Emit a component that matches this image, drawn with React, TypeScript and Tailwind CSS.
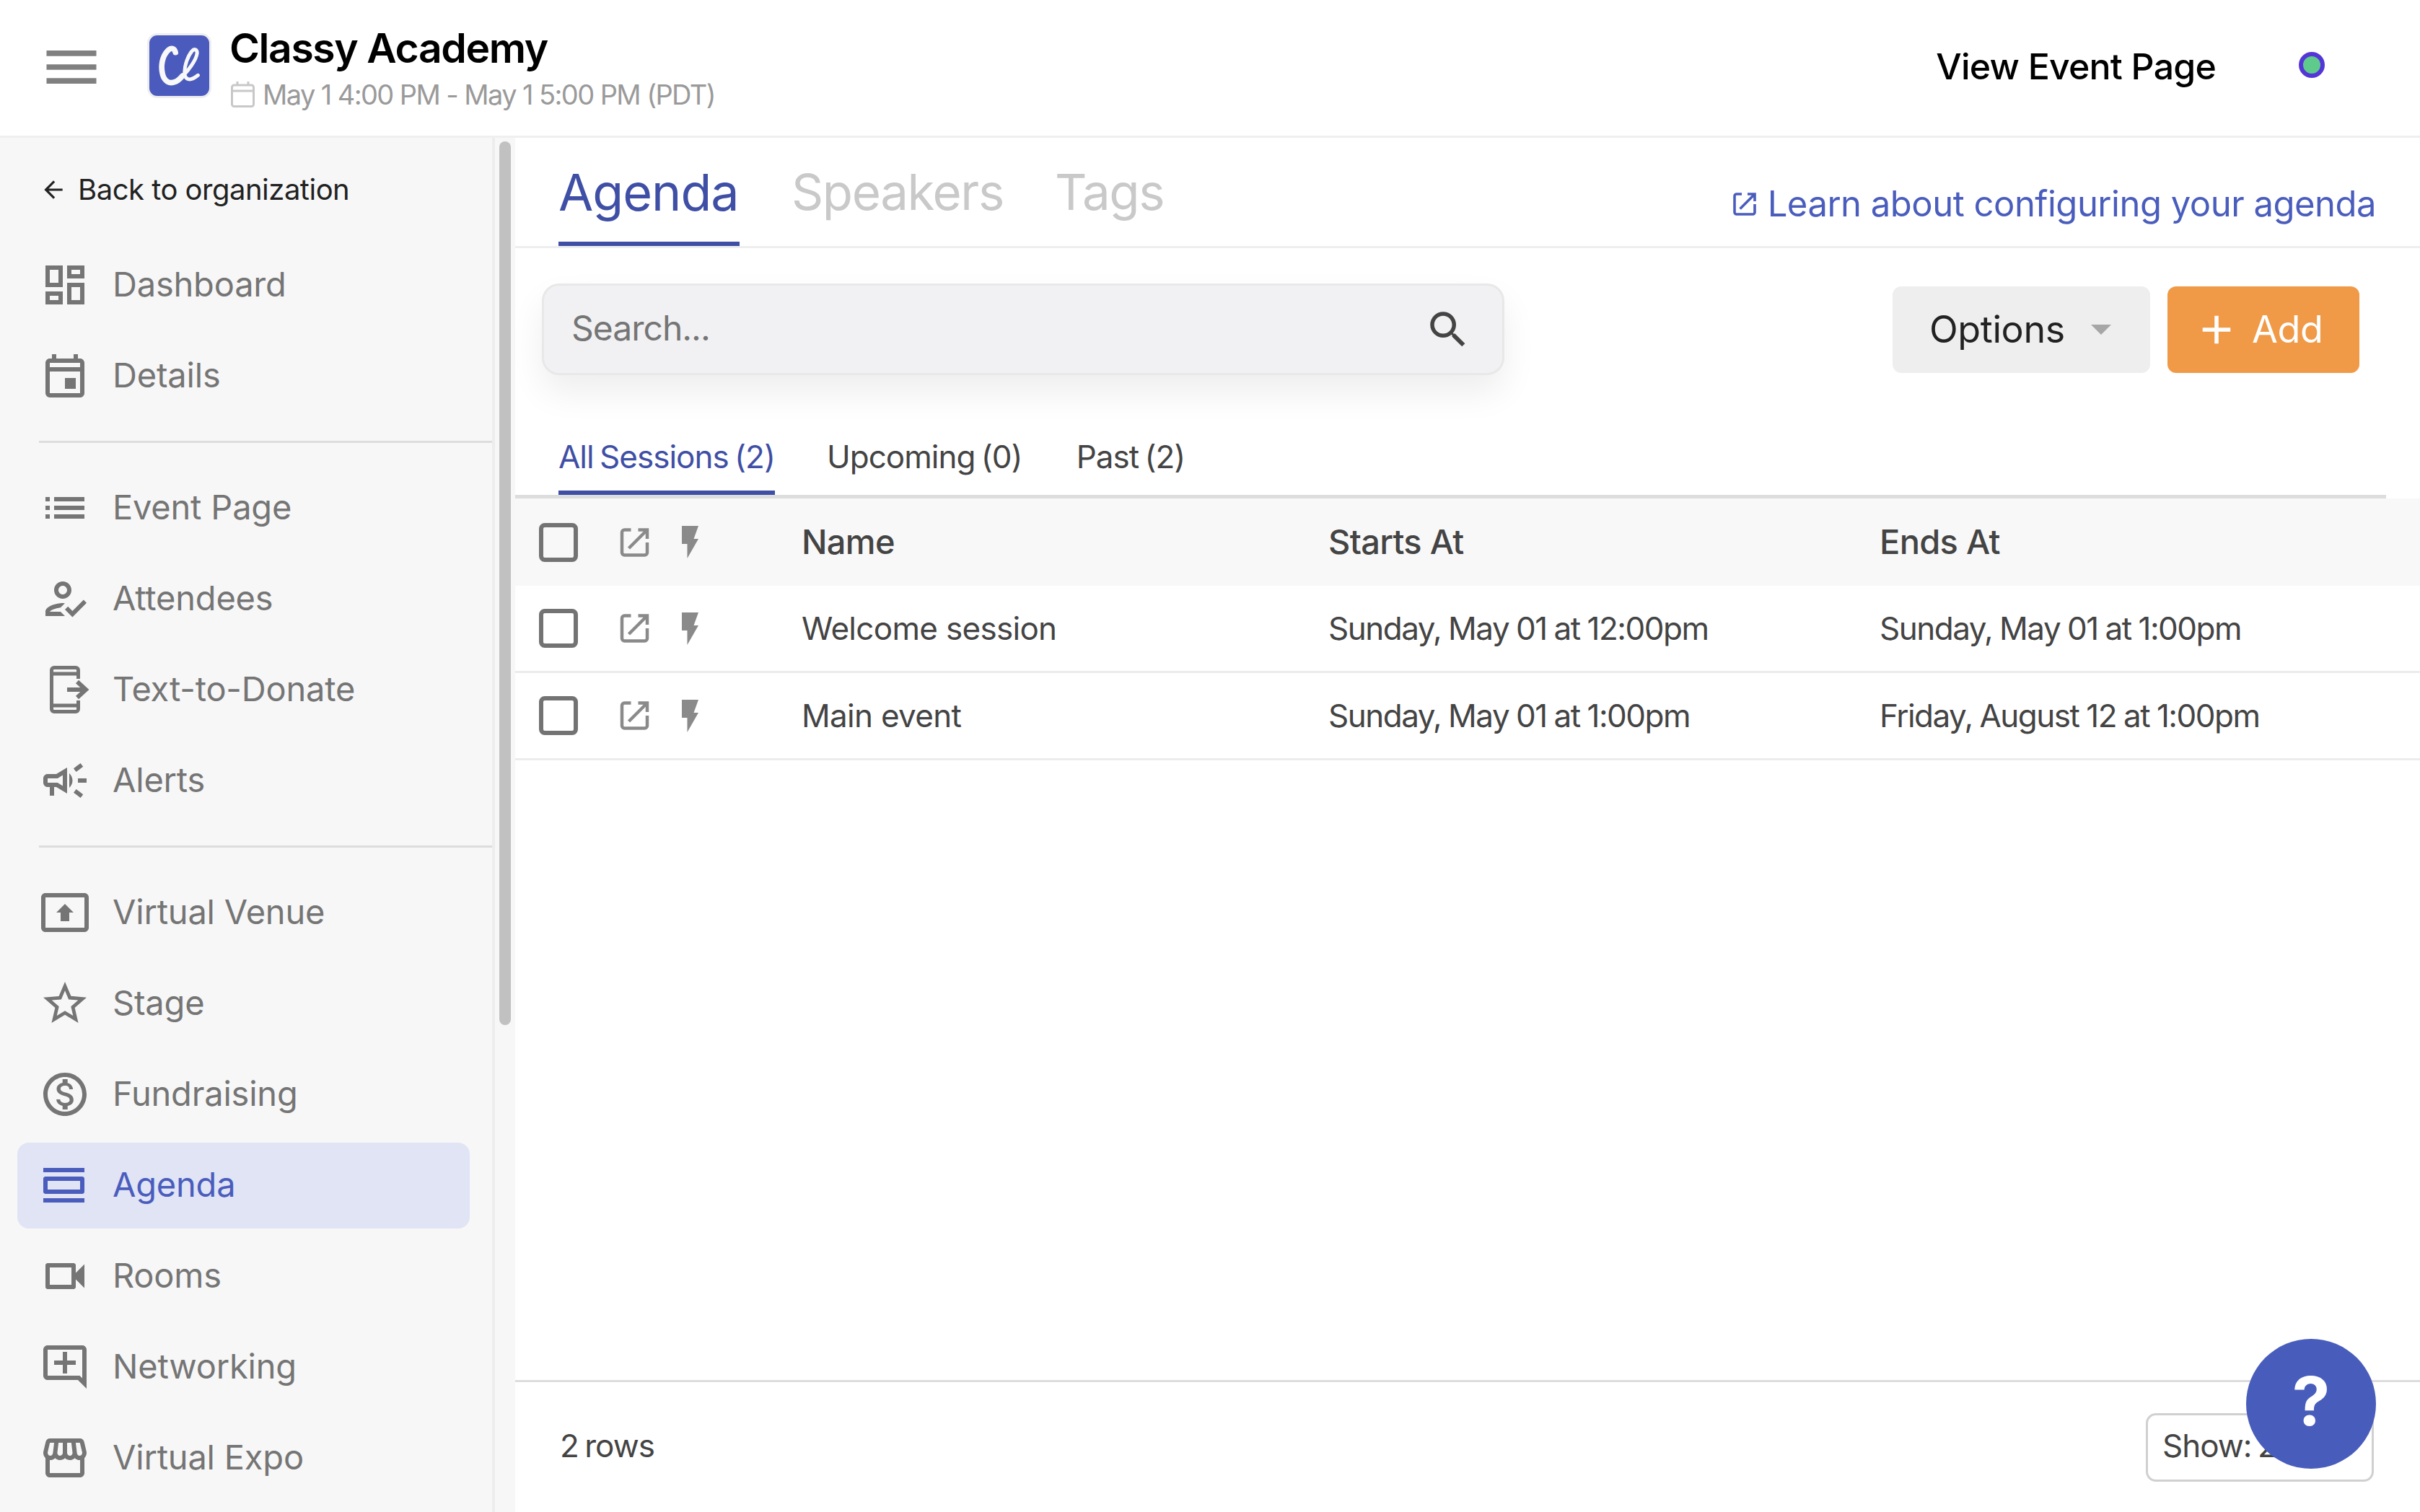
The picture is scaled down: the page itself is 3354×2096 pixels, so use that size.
import React from "react";
import {
  MdMenu, MdOutlineDashboard, MdOutlineEvent, MdList, MdOutlineHowToReg, MdOutlineCampaign,
  MdOutlinePresentToAll, MdStarBorder, MdOutlineMonetizationOn, MdOutlineViewDay, MdOutlineVideocam,
  MdOutlineAddComment, MdOutlineStorefront, MdArrowBack, MdSearch, MdAdd,
} from "react-icons/md";

function PhoneIcon({ className }: { className?: string }) {
  return (
    <svg viewBox="0 0 72 72" className={className} fill="none" stroke="currentColor">
      <path d="M54.5 21V9a3.500 3.500 0 0 0-3.500-3.500H21A3.500 3.500 0 0 0 17.500 9v54a3.500 3.500 0 0 0 3.500 3.500h30a3.500 3.500 0 0 0 3.500-3.500V51" strokeWidth="5" />
      <path d="M18 14h36M18 58h36" strokeWidth="5" />
      <path d="M39 36h24M53 25l12 11-12 11" strokeWidth="6" />
    </svg>
  );
}

function Bolt({ className }: { className?: string }) {
  return (
    <svg viewBox="0 0 23 45" className={className} fill="currentColor">
      <path d="M0 0h23l-6.500 18H23L7.500 45V25H0z" />
    </svg>
  );
}

function OpenIcon({ className }: { className?: string }) {
  return (
    <svg viewBox="0 0 40 40" className={className} fill="none" stroke="currentColor" strokeWidth="4.500">
      <path d="M15 2.500H6A3.500 3.500 0 0 0 2.500 6v28A3.500 3.500 0 0 0 6 37.500h28a3.500 3.500 0 0 0 3.500-3.500V20" />
      <path d="M12 28 36 4M25 2.500h12.500V15" />
    </svg>
  );
}

type Item = { label: string; Icon: React.ComponentType<{ className?: string }>; active?: boolean };

const groupA: Item[] = [
  { label: "Dashboard", Icon: MdOutlineDashboard },
  { label: "Details", Icon: MdOutlineEvent },
];
const groupB: Item[] = [
  { label: "Event Page", Icon: MdList },
  { label: "Attendees", Icon: MdOutlineHowToReg },
  { label: "Text-to-Donate", Icon: PhoneIcon },
  { label: "Alerts", Icon: MdOutlineCampaign },
];
const groupC: Item[] = [
  { label: "Virtual Venue", Icon: MdOutlinePresentToAll },
  { label: "Stage", Icon: MdStarBorder },
  { label: "Fundraising", Icon: MdOutlineMonetizationOn },
  { label: "Agenda", Icon: MdOutlineViewDay, active: true },
  { label: "Rooms", Icon: MdOutlineVideocam },
  { label: "Networking", Icon: MdOutlineAddComment },
  { label: "Virtual Expo", Icon: MdOutlineStorefront },
];

function NavItem({ item }: { item: Item }) {
  const { Icon, label, active } = item;
  return (
    <div className="h-[126px] flex items-center pl-[24px]">
      <div
        className={
          active
            ? "w-[627px] h-[119px] rounded-[16px] bg-[#e0e4f5] text-[#4a5dbd] flex items-center pl-[30px] gap-[30px]"
            : "w-[627px] h-[119px] rounded-[16px] text-[#757575] flex items-center pl-[30px] gap-[30px]"
        }
      >
        <Icon className="w-[72px] h-[72px] shrink-0" />
        <span className="text-[47px] leading-none tracking-[-0.2px] pb-[3px]">{label}</span>
      </div>
    </div>
  );
}

function Row({ name, start, end, header }: { name: string; start: string; end: string; header?: boolean }) {
  const dateCls = header ? "" : "tracking-[-1.5px] [word-spacing:-1px]";
  return (
    <div
      className={
        header
          ? "h-[121px] bg-[#f8f8f8] flex items-center text-[47px] font-medium text-[#444] tracking-[-0.7px]"
          : "h-[121px] border-b-[3px] border-[#ececec] flex items-center text-[44px] text-[#444] tracking-[-0.7px]"
      }
    >
      <div className="w-[397px] shrink-0 flex items-center pl-[33px]">
        <div className="w-[54px] h-[54px] rounded-[8px] border-[6px] border-[#737373]" />
        <OpenIcon className="w-[41px] h-[40px] ml-[58px] text-[#8a8a8a]" />
        <Bolt className="w-[23px] h-[45px] ml-[45px] text-[#8a8a8a]" />
      </div>
      <div className="w-[730px] shrink-0">{name}</div>
      <div className={"w-[764px] shrink-0 " + dateCls}>{start}</div>
      <div className={dateCls}>{end}</div>
    </div>
  );
}

export default function App() {
  return (
    <div className="relative w-[3354px] h-[2096px] overflow-hidden bg-white flex flex-col [font-family:Inter,sans-serif]">
      <header className="h-[191px] shrink-0 border-b-[3px] border-[#efefef] flex items-center">
        <MdMenu className="w-[92px] h-[92px] ml-[53px] mt-[-2px] text-[#808080]" />
        <div className="w-[89px] h-[90px] ml-[59px] mb-[6px] rounded-[14px] bg-[#4a5bbd] border-[3px] border-[#eeeeee] overflow-hidden">
          <svg viewBox="51 59 250 252" className="w-full h-full" fill="none" stroke="#f8f8f8" strokeLinecap="round" strokeLinejoin="round">
            <path d="M160 130c-4-18-18-22-32-8-24 24-30 66-22 98 8 32 30 42 52 33 13-5 23-15 32-26" strokeWidth="23" />
            <path d="M190 229c22-22 56-66 60-94 2-16-10-24-22-10-16 20-30 58-30 86 0 34 22 42 56 14" strokeWidth="15" />
          </svg>
        </div>
        <div className="ml-[27px] flex flex-col mt-[2px]">
          <div className="text-[57px] leading-[66px] font-semibold text-black tracking-[-1.4px] ml-[-2px]">Classy Academy</div>
          <div className="flex items-center text-[#9a9a9a] text-[38px] leading-[50px] tracking-[-1.6px] mt-[6px]">
            <svg viewBox="0 0 33 36" className="w-[33px] h-[36px] mr-[11px]" fill="none" stroke="#c8c8c8" strokeWidth="3">
              <rect x="1.500" y="5" width="30" height="29.500" rx="3" />
              <path d="M1.500 13h30M9 0v5M24 0v5" />
            </svg>
            May 1 4:00 PM - May 1 5:00 PM (PDT)
          </div>
        </div>
        <div className="ml-auto text-[50px] font-medium text-black tracking-[-0.8px] mb-[4px]">View Event Page</div>
        <div className="w-[36px] h-[36px] rounded-full bg-[#5ecb8c] border-[6px] border-[#5436d6] ml-[115px] mr-[132px] mb-[8px]" />
      </header>

      <div className="flex-1 flex min-h-0">
        <aside className="w-[714px] shrink-0 flex bg-white">
          <nav className="w-[682px] shrink-0 bg-[#f7f7f7]">
            <div className="h-[141px] flex items-center pl-[55px] pt-[3px] text-[#222] text-[40px] tracking-[-0.5px]">
              <MdArrowBack className="w-[38px] h-[38px] mr-[15px]" />
              Back to organization
            </div>
            {groupA.map((i) => <NavItem key={i.label} item={i} />)}
            <div className="h-[3px] bg-[#dddddd] ml-[54px] mt-[27px] mb-[27px]" />
            {groupB.map((i) => <NavItem key={i.label} item={i} />)}
            <div className="h-[3px] bg-[#dddddd] ml-[54px] mt-[27px] mb-[27px]" />
            {groupC.map((i) => <NavItem key={i.label} item={i} />)}
          </nav>
          <div className="w-[4px] shrink-0 bg-[#ededed]" />
          <div className="flex-1 bg-[#f7f7f7] pl-[6px] pt-[5px]">
            <div className="w-[16px] h-[1225px] rounded-[8px] bg-[#c1c1c1]" />
          </div>
        </aside>

        <main className="flex-1 min-w-0 flex flex-col">
          <div className="h-[153px] shrink-0 border-b-[3px] border-[#eeeeee] flex pl-[60px] pr-[61px]">
            <div className="w-[251px] h-[150px] border-b-[6px] border-[#3f4fa5] text-[#3f4fa5] text-[70px] flex items-center pt-[6px] tracking-[-1px]">Agenda</div>
            <div className="h-[150px] ml-[72px] text-[#c9c9c9] text-[69px] flex items-center pt-[2px] tracking-[-1.4px]">Speakers</div>
            <div className="h-[150px] ml-[71px] text-[#c9c9c9] text-[69px] flex items-center pt-[2px] tracking-[-1.4px]">Tags</div>
            <div className="ml-auto h-[150px] flex items-center pt-[34px] text-[#4a5dbd] text-[49px] tracking-[-0.5px]">
              <OpenIcon className="w-[32px] h-[32px] mr-[16px]" />
              Learn about configuring your agenda
            </div>
          </div>

          <div className="h-[250px] shrink-0 flex items-start pl-[37px] pr-[84px] pt-[49px]">
            <div className="w-[1334px] h-[127px] rounded-[24px] bg-[#f1f1f3] border-[3px] border-[#e8e8e8] shadow-[0_24px_48px_rgba(0,0,0,0.07)] flex items-center pl-[38px] pr-[42px] text-[48px] text-[#757575] tracking-[-1px]">
              <span className="pb-[4px]">Search...</span>
              <MdSearch className="w-[66px] h-[66px] ml-auto text-[#444]" />
            </div>
            <div className="ml-auto mt-[4px] w-[357px] h-[120px] rounded-[12px] bg-[#eeeeee] flex items-center pl-[51px] text-[52px] text-[#222] tracking-[-0.4px]">
              Options
              <svg viewBox="0 0 28 14" className="w-[28px] h-[14px] ml-[36px]" fill="#a6a6a6"><path d="M0 0h28L14 14z" /></svg>
            </div>
            <div className="ml-[24px] mt-[4px] w-[266px] h-[120px] rounded-[12px] bg-[#f09a47] flex items-center pl-[35px] text-[52px] text-white tracking-[-0.3px]">
              <MdAdd className="w-[66px] h-[66px] mr-[16px]" />
              Add
            </div>
          </div>

          <div className="h-[97px] shrink-0 w-[2593px] border-b-[5px] border-[#dddddd] flex items-end pl-[60px] text-[44px] text-[#444] tracking-[-1px] [word-spacing:-3px]">
            <div className="w-[300px] h-[92px] border-b-[6px] border-[#3f4fa5] text-[#3f4fa5] flex items-center pb-[8px]">All Sessions (2)</div>
            <div className="h-[92px] flex items-center pb-[14px] ml-[72px]">Upcoming (0)</div>
            <div className="h-[92px] flex items-center pb-[14px] ml-[75px]">Past (2)</div>
          </div>

          <Row header name="Name" start="Starts At" end="Ends At" />
          <Row name="Welcome session" start="Sunday, May 01 at 12:00pm" end="Sunday, May 01 at 1:00pm" />
          <Row name="Main event" start="Sunday, May 01 at 1:00pm" end="Friday, August 12 at 1:00pm" />

          <div className="flex-1" />

          <div className="h-[183px] shrink-0 border-t-[3px] border-[#dddddd] flex items-center pl-[62px] pr-[64px] text-[44px] text-[#444] tracking-[-1px] [word-spacing:-3px]">
            <span className="mb-[4px]">2 rows</span>
            <div className="ml-auto w-[316px] h-[95px] rounded-[14px] border-[3px] border-[#d0d0d0] flex items-center pl-[20px] pb-[4px]">Show: 25</div>
          </div>
        </main>
      </div>

      <div className="absolute right-[61px] bottom-[60px] w-[180px] h-[180px] rounded-full bg-[#485dbb] flex items-center justify-center text-white text-[94px] font-bold pb-[8px]">?</div>
    </div>
  );
}
